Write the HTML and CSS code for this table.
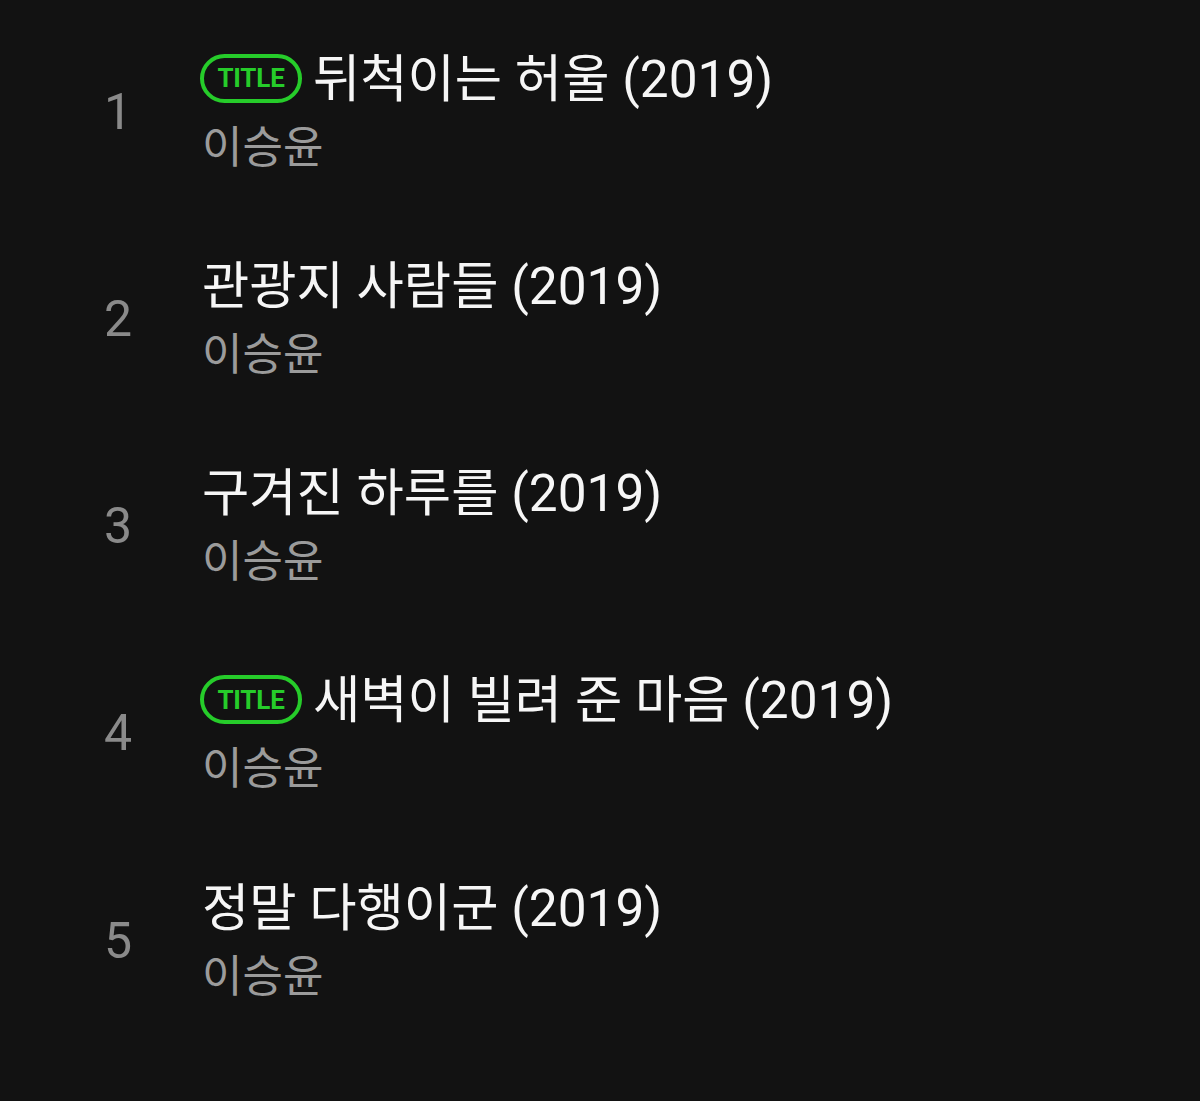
FILE: index.html
```html
<!DOCTYPE html>
<html lang="ko">
<head>
<meta charset="utf-8">
<title>Tracks</title>
<link rel="stylesheet" href="styles.css">
</head>
<body>
<ol class="tracks">
  <li class="track">
    <span class="num">1</span>
    <div class="info">
      <div class="title"><span class="badge">TITLE</span><span>뒤척이는 허울 (2019)</span></div>
      <div class="artist">이승윤</div>
    </div>
  </li>
  <li class="track">
    <span class="num">2</span>
    <div class="info">
      <div class="title"><span>관광지 사람들 (2019)</span></div>
      <div class="artist">이승윤</div>
    </div>
  </li>
  <li class="track">
    <span class="num">3</span>
    <div class="info">
      <div class="title"><span>구겨진 하루를 (2019)</span></div>
      <div class="artist">이승윤</div>
    </div>
  </li>
  <li class="track">
    <span class="num">4</span>
    <div class="info">
      <div class="title"><span class="badge">TITLE</span><span>새벽이 빌려 준 마음 (2019)</span></div>
      <div class="artist">이승윤</div>
    </div>
  </li>
  <li class="track">
    <span class="num">5</span>
    <div class="info">
      <div class="title"><span>정말 다행이군 (2019)</span></div>
      <div class="artist">이승윤</div>
    </div>
  </li>
</ol>
</body>
</html>
```
FILE: styles.css
```css
html, body {
  margin: 0;
  padding: 0;
  background: #121212;
}
body {
  font-family: Roboto, "Noto Sans CJK KR", sans-serif;
  color: #f4f4f4;
}
.tracks {
  list-style: none;
  margin: 0;
  padding: 0;
}
.track {
  display: flex;
  align-items: center;
  height: 207.25px;
  box-sizing: border-box;
  padding-top: 24px;
}
.num {
  width: 202px;
  box-sizing: border-box;
  padding-left: 90px;
  padding-right: 56px;
  margin-bottom: 8px;
  text-align: center;
  font-size: 50px;
  color: #8a8a8a;
}
.info {
  display: flex;
  flex-direction: column;
}
.title {
  display: flex;
  align-items: center;
  gap: 11px;
  font-size: 51.4px;
  line-height: 64px;
  height: 64px;
  color: #f6f6f6;
  white-space: nowrap;
}
.badge {
  display: inline-flex;
  align-items: center;
  justify-content: center;
  box-sizing: border-box;
  width: 102px;
  height: 49px;
  margin-left: -2px;
  margin-top: -3px;
  border: 4px solid #26cc2a;
  border-radius: 25px;
  color: #26cc2a;
  font-family: Roboto, sans-serif;
  font-weight: 700;
  font-size: 26px;
  line-height: 1;
  letter-spacing: -0.2px;
}
.artist {
  font-size: 44px;
  line-height: 72px;
  color: #9b9b9b;
}
```
